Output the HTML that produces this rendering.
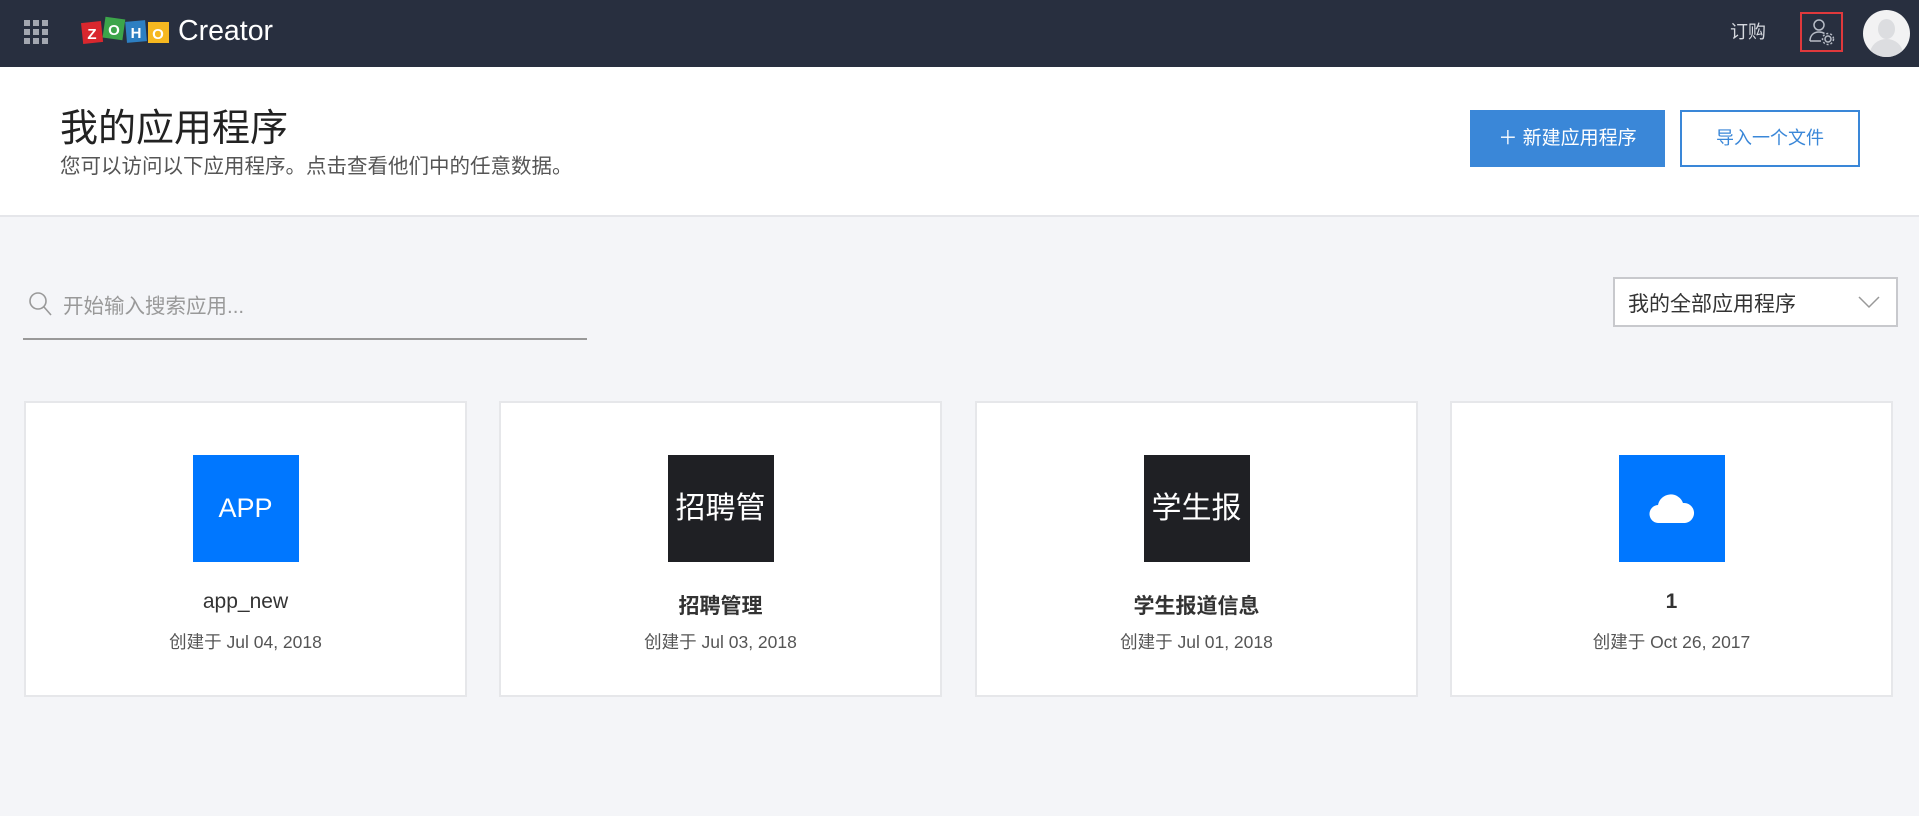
<!DOCTYPE html>
<html><head><meta charset="utf-8"><style>
*{margin:0;padding:0;box-sizing:border-box}
body{width:1919px;height:816px;background:#f4f5f8;font-family:"Liberation Sans","Noto Sans CJK SC",sans-serif;position:relative;overflow:hidden}
.hdr{position:absolute;left:0;top:0;width:1919px;height:67px;background:#282f3f}
.ab{position:absolute}
.white{position:absolute;left:0;top:67px;width:1919px;height:150px;background:#fff;border-bottom:2px solid #e5e6ea}
.card{position:absolute;top:401px;width:443px;height:296px;background:#fff;border:2px solid #e6e7ea;text-align:center}
.ic{position:absolute;left:50%;margin-left:-53px;top:52px;width:106px;height:107px;color:#fff;font-size:30px;line-height:107px;white-space:nowrap;overflow:hidden}
.nm{position:absolute;left:0;right:0;top:187px;font-size:21px;color:#333;font-weight:bold}
.dt{position:absolute;left:0;right:0;top:226px;font-size:17.5px;color:#555}
</style></head><body>
<div class="hdr">
 <svg class="ab" style="left:24px;top:20px" width="24" height="24"><g fill="#a3a7b0"><rect x="0" y="0" width="6" height="6"/><rect x="9" y="0" width="6" height="6"/><rect x="18" y="0" width="6" height="6"/><rect x="0" y="9" width="6" height="6"/><rect x="9" y="9" width="6" height="6"/><rect x="18" y="9" width="6" height="6"/><rect x="0" y="18" width="6" height="6"/><rect x="9" y="18" width="6" height="6"/><rect x="18" y="18" width="6" height="6"/></g></svg>
 <svg class="ab" style="left:81px;top:16px" width="90" height="32">
  <g font-family="Liberation Sans" font-weight="bold" font-size="15" fill="#fff" text-anchor="middle">
  <rect x="1" y="6" width="20" height="21" fill="#d9272e" transform="rotate(-6 11 16)"/><text x="11" y="23">Z</text>
  <rect x="23" y="2" width="20" height="21" fill="#3ca54a" transform="rotate(8 33 12)"/><text x="33" y="19">O</text>
  <rect x="45" y="5" width="20" height="21" fill="#2d7fc2" transform="rotate(-5 55 15)"/><text x="55" y="22">H</text>
  <rect x="67" y="6" width="21" height="21" fill="#f6b820"/><text x="77" y="23">O</text></g>
 </svg>
 <div class="ab" style="left:178px;top:15px;color:#fff;font-size:28.5px">Creator</div>
 <div class="ab" style="left:1730px;top:18px;color:#d6d9df;font-size:18px">订购</div>
 <div class="ab" style="left:1800px;top:12px;width:43px;height:40px;border:2px solid #e0393c"></div>
 <svg class="ab" style="left:1807px;top:17px" width="30" height="30" fill="none" stroke="#b7bcc6" stroke-width="1.5"><circle cx="12" cy="8" r="5"/><path d="M3 24c0-6 4-9 9-9 2 0 4 .5 5.5 1.5M3 24h11"/><circle cx="21" cy="22" r="3"/><circle cx="21" cy="22" r="5.5" stroke-dasharray="2 2"/></svg>
 <div class="ab" style="left:1863px;top:10px;width:47px;height:47px;border-radius:50%;background:#f2f2f3;overflow:hidden"><div class="ab" style="left:15px;top:9px;width:17px;height:20px;border-radius:50%;background:#dcdde0"></div><div class="ab" style="left:7px;top:29px;width:33px;height:30px;border-radius:50%;background:#dcdde0"></div></div>
</div>
<div class="white">
 <div class="ab" style="left:60px;top:30px;font-size:38px;color:#222">我的应用程序</div>
 <div class="ab" style="left:60px;top:82px;font-size:20.5px;color:#555">您可以访问以下应用程序。点击查看他们中的任意数据。</div>
 <div class="ab" style="left:1470px;top:43px;width:195px;height:57px;background:#3a87d8;color:#fff;font-size:19px;line-height:57px;text-align:center">＋ 新建应用程序</div>
 <div class="ab" style="left:1680px;top:43px;width:180px;height:57px;border:2px solid #3a87d8;color:#3a87d8;font-size:18px;line-height:53px;text-align:center">导入一个文件</div>
</div>
<svg class="ab" style="left:28px;top:291px" width="26" height="28" fill="none" stroke="#999" stroke-width="1.6"><circle cx="10" cy="10" r="8"/><path d="M16 16l7 8"/></svg>
<div class="ab" style="left:63px;top:289px;font-size:20.5px;color:#999">开始输入搜索应用...</div>
<div class="ab" style="left:23px;top:338px;width:564px;height:2px;background:#999"></div>
<div class="ab" style="left:1613px;top:277px;width:285px;height:50px;background:#fff;border:2px solid #c8c9cd"></div>
<div class="ab" style="left:1628px;top:288px;font-size:21px;color:#333">我的全部应用程序</div>
<svg class="ab" style="left:1858px;top:295px" width="22" height="14" fill="none" stroke="#999" stroke-width="1.5"><path d="M1 2l10 10 10-10"/></svg>

<div class="card" style="left:24px"><div class="ic" style="background:#0077ff;font-size:27px">APP</div><div class="nm" style="font-weight:normal">app_new</div><div class="dt">创建于 Jul 04, 2018</div></div>
<div class="card" style="left:499px"><div class="ic" style="background:#1f2024">招聘管</div><div class="nm">招聘管理</div><div class="dt">创建于 Jul 03, 2018</div></div>
<div class="card" style="left:975px"><div class="ic" style="background:#1f2024">学生报</div><div class="nm">学生报道信息</div><div class="dt">创建于 Jul 01, 2018</div></div>
<div class="card" style="left:1450px"><div class="ic" style="background:#0077ff"><svg style="position:absolute;left:30px;top:36px" width="46" height="34"><path d="M10 32a9 9 0 0 1-1-18 13 13 0 0 1 25-2 10 10 0 0 1 2 20z" fill="#fff"/></svg></div><div class="nm">1</div><div class="dt">创建于 Oct 26, 2017</div></div>
</body></html>
